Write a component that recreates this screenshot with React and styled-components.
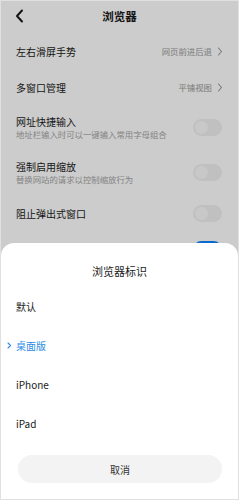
import React from "react";
import styled, { createGlobalStyle } from "styled-components";

const GlobalStyle = createGlobalStyle`
  html, body {
    margin: 0;
    padding: 0;
    background: #ffffff;
  }
  body {
    font-family: "Noto Sans CJK SC", "Noto Sans", sans-serif;
  }
`;

const settings = [
  { title: "左右滑屏手势", value: "网页前进后退" },
  { title: "多窗口管理", value: "平铺视图" },
  { title: "网址快捷输入", desc: "地址栏输入时可以一键输入常用字母组合", toggle: false },
  { title: "强制启用缩放", desc: "替换网站的请求以控制缩放行为", toggle: false },
  { title: "阻止弹出式窗口", toggle: false },
  { title: "广告过滤", toggle: true },
];

const options = ["默认", "桌面版", "iPhone", "iPad"];
const selected = "桌面版";

const App = () => {
  return (
    <>
      <GlobalStyle />
      <Screen>
        <Page>
          <Header>
            <BackButton>
              <svg width="10" height="14" viewBox="0 0 10 14">
                <path d="M7 1.5 L2 7 L7 12.5" fill="none" stroke="#1a1a1a" strokeWidth="2" strokeLinecap="round" strokeLinejoin="round" />
              </svg>
            </BackButton>
            <Title>浏览器</Title>
          </Header>
          <List>
            {settings.map((s) => (
              <Row key={s.title} $tall={!!s.desc}>
                <RowText>
                  <RowTitle>{s.title}</RowTitle>
                  {s.desc && <RowDesc>{s.desc}</RowDesc>}
                </RowText>
                {s.value && (
                  <Value>
                    {s.value}
                    <svg width="6" height="9" viewBox="0 0 6 9">
                      <path d="M1.5 1 L4.5 4.5 L1.5 8" fill="none" stroke="#999" strokeWidth="1.1" strokeLinecap="round" strokeLinejoin="round" />
                    </svg>
                  </Value>
                )}
                {s.toggle !== undefined && (
                  <Switch $on={s.toggle}>
                    <Knob $on={s.toggle} />
                  </Switch>
                )}
              </Row>
            ))}
          </List>
        </Page>
        <Overlay />
        <Sheet>
          <SheetTitle>浏览器标识</SheetTitle>
          {options.map((o) => (
            <Option key={o} $active={o === selected}>
              {o === selected && (
                <Mark>
                  <svg width="5" height="7" viewBox="0 0 5 7">
                    <path d="M1 1 L3.6 3.5 L1 6" fill="none" stroke="#2d8ce6" strokeWidth="1.1" strokeLinecap="round" strokeLinejoin="round" />
                  </svg>
                </Mark>
              )}
              {o}
            </Option>
          ))}
          <CancelButton>取消</CancelButton>
        </Sheet>
      </Screen>
    </>
  );
};

const Screen = styled.div`
  position: relative;
  width: 239px;
  height: 500px;
  box-sizing: border-box;
  border: 1px solid #e0e0e0;
  overflow: hidden;
  background: #ffffff;
`;

const Page = styled.div`
  display: flex;
  flex-direction: column;
`;

const Header = styled.div`
  position: relative;
  height: 30px;
  display: flex;
  align-items: center;
  justify-content: center;
`;

const BackButton = styled.div`
  position: absolute;
  left: 14px;
  top: 8px;
  display: flex;
`;

const Title = styled.div`
  font-size: 11.5px;
  font-weight: 700;
  color: #1a1a1a;
`;

const List = styled.div`
  display: flex;
  flex-direction: column;
  padding-top: 2px;
`;

const Row = styled.div`
  height: ${(p) => (p.$tall ? 45 : 36)}px;
  display: flex;
  align-items: center;
  justify-content: space-between;
  padding: 0 15px 0 15px;
`;

const RowText = styled.div`
  display: flex;
  flex-direction: column;
  gap: 1px;
`;

const RowTitle = styled.div`
  font-size: 10px;
  line-height: 13px;
  color: #1a1a1a;
`;

const RowDesc = styled.div`
  font-size: 8.4px;
  line-height: 11px;
  color: #a6a6a6;
`;

const Value = styled.div`
  display: flex;
  align-items: center;
  gap: 5px;
  font-size: 8.4px;
  color: #999999;
`;

const Switch = styled.div`
  width: 29px;
  height: 17px;
  border-radius: 9px;
  margin-right: 1px;
  background: ${(p) => (p.$on ? "#0d84ff" : "#f1f1f1")};
  display: flex;
  align-items: center;
  justify-content: ${(p) => (p.$on ? "flex-end" : "flex-start")};
  padding: 0 2px;
  box-sizing: border-box;
`;

const Knob = styled.div`
  width: 13px;
  height: 13px;
  border-radius: 50%;
  background: ${(p) => (p.$on ? "#ffffff" : "#fafafa")};
`;

const Overlay = styled.div`
  position: absolute;
  inset: 0;
  background: rgba(0, 0, 0, 0.2);
`;

const Sheet = styled.div`
  position: absolute;
  left: 0;
  right: 0;
  bottom: 0;
  height: 256px;
  background: #ffffff;
  border-radius: 13px 13px 0 0;
  display: flex;
  flex-direction: column;
  padding-bottom: 14px;
  box-sizing: border-box;
`;

const SheetTitle = styled.div`
  padding: 21px 0 9px;
  line-height: 14px;
  font-size: 11px;
  color: #1a1a1a;
  text-align: center;
`;

const Option = styled.div`
  position: relative;
  height: 39px;
  display: flex;
  align-items: center;
  padding-left: 15px;
  font-size: 10px;
  color: ${(p) => (p.$active ? "#2d8ce6" : "#1a1a1a")};
`;

const Mark = styled.span`
  position: absolute;
  left: 6px;
  top: 16px;
  display: flex;
`;

const CancelButton = styled.div`
  margin: 12px 16px 0 17px;
  height: 28px;
  border-radius: 14px;
  background: #f3f3f3;
  display: flex;
  align-items: center;
  justify-content: center;
  font-size: 10px;
  color: #333333;
`;

export default App;
